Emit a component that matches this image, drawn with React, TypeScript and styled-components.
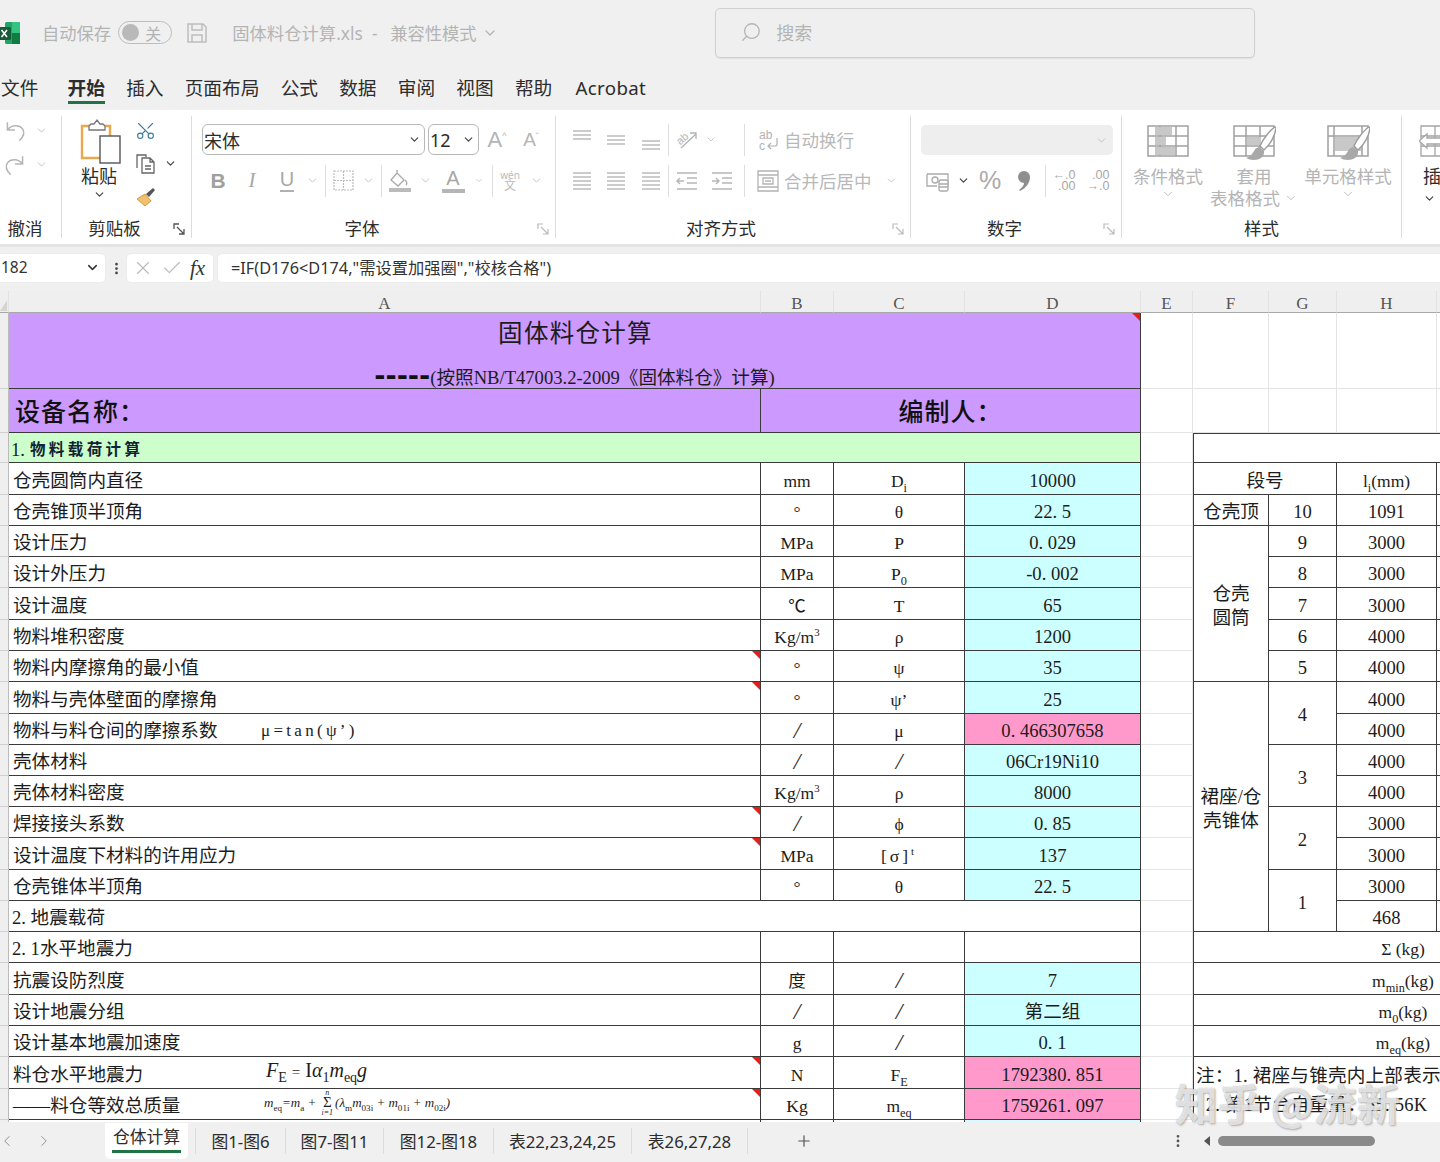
import React from "react";
import styled, { createGlobalStyle } from "styled-components";
import { Search, Scissors, X, Check, Plus, ChevronLeft, ChevronRight, ChevronDown, EllipsisVertical } from "lucide-react";

const UI = `"Noto Sans", "Noto Sans CJK SC", sans-serif`;
const SHEET = `"Liberation Serif", "Noto Sans CJK SC", serif`;
const MUTED = "#b4b4b4";

const Global = createGlobalStyle`
  html, body { margin: 0; padding: 0; background: #f0f0f0; }
  * { box-sizing: border-box; }
`;

const Page = styled.div`
  width: 1440px; height: 1162px; overflow: hidden; background: #f0f0f0;
  display: flex; flex-direction: column; font-family: ${UI}; position: relative;
`;

/* title bar */
const TitleBar = styled.div`
  height: 70px; padding: 0 0 5px 0; display: flex; align-items: center; flex: none;
  color: ${MUTED}; font-size: 17.3px; white-space: nowrap;
`;
const Logo = styled.svg` width: 22px; height: 24px; margin-left: -2px; flex: none; `;
const AutoSave = styled.span` margin-left: 22px; `;
const Toggle = styled.div`
  width: 54px; height: 23px; margin-left: 7px; border: 1px solid #bdbdbd; border-radius: 12px;
  display: flex; align-items: center; gap: 6px; padding-left: 3px; font-size: 16px; flex: none;
`;
const Knob = styled.i` width: 17px; height: 17px; border-radius: 50%; background: #b9b9b9; display: block; `;
const SaveIcon = styled.svg` width: 22px; height: 22px; margin-left: 14px; flex: none; `;
const FileName = styled.span` margin-left: 24px; width: 158px; letter-spacing: 0.05px; `;
const Compat = styled.span` display: flex; align-items: center; gap: 5px; width: 325px; `;
const SearchBox = styled.div`
  width: 540px; height: 50px; margin-top: 1px; border: 1px solid #d0d0d0; border-radius: 5px; background: #efefef;
  box-shadow: 0 1px 1px #e0e0e0; display: flex; align-items: center; gap: 14px; padding: 0 0 3px 24px; font-size: 18px;
`;

/* menu */
const MenuBar = styled.nav`
  height: 40px; flex: none; display: flex; gap: 21.2px; padding-left: 1px; align-items: flex-start; font-size: 18.7px; color: #2c2c2c;
`;
const MenuItem = styled.span<{ $active?: boolean; $ml?: number }>`
  height: 34px; padding-top: 4px; line-height: 28px; white-space: nowrap;
  font-weight: ${(p) => (p.$active ? 700 : 400)};
  border-bottom: ${(p) => (p.$active ? "3px solid #217346" : "none")};
  margin-left: ${(p) => p.$ml ?? 0}px;
`;
const MenuLatin = styled(MenuItem)` letter-spacing: 0.35px; `;

/* ribbon */
const Ribbon = styled.div`
  height: 137px; flex: none; background: #fff; border-bottom: 3px solid #e4e4e4; display: flex; overflow: hidden;
`;
const Group = styled.section<{ $w: number; $pad?: number; $noLine?: boolean }>`
  width: ${(p) => p.$w}px; flex: none; height: 134px; display: flex; flex-direction: column; position: relative;
  padding-left: ${(p) => p.$pad ?? 0}px;
  &::after {
    content: ""; display: ${(p) => (p.$noLine ? "none" : "block")};
    position: absolute; right: 0; top: 6px; bottom: 6px; width: 1px; background: #dcdcdc;
  }
`;
const Body = styled.div` flex: 1; display: flex; min-height: 0; `;
const Stack = styled.div<{ $top?: number; $gap?: number }>`
  display: flex; flex-direction: column; padding-top: ${(p) => p.$top ?? 14}px; gap: ${(p) => p.$gap ?? 10}px;
`;
const Row = styled.div<{ $h?: number }>` display: flex; align-items: center; height: ${(p) => p.$h ?? 31}px; `;
const Slot = styled.div<{ $w: number }>`
  width: ${(p) => p.$w}px; height: 100%; flex: none; display: flex; align-items: center; justify-content: center;
  color: ${MUTED};
`;
const VLine = styled.i<{ $ml?: number; $h?: number }>`
  width: 1px; height: ${(p) => p.$h ?? 32}px; background: #dedede; flex: none; display: block; margin-left: ${(p) => p.$ml ?? 0}px;
`;
const Foot = styled.div<{ $rp?: number }>`
  height: 30px; flex: none; display: flex; align-items: center; padding: 0 ${(p) => p.$rp ?? 1}px 1px 0; font-size: 17.5px; color: #2c2c2c;
`;
const FootText = styled.span` flex: 1; text-align: center; line-height: 21px; `;
const Launcher = styled.svg<{ $ml?: number }>` width: 13px; height: 13px; margin: 2px 5px 0 ${(p) => p.$ml ?? 5}px; flex: none; `;
const Chev = ({ dark, s }: { dark?: boolean; s?: number }) => <ChevronDown size={s ?? 13} strokeWidth={dark ? 2.2 : 1.6} color={dark ? "#444" : "#bbb"} />;

const Paste = styled.div`
  width: 70px; margin-left: -1px; display: flex; flex-direction: column; align-items: center; padding-top: 8px; color: #2c2c2c; font-size: 18px; flex: none;
`;
const PasteIcon = styled.svg` width: 44px; height: 46px; margin-left: 3px; flex: none; `;
const PasteLabel = styled.span` line-height: 24px; `;
const ClipTools = styled.div` width: 46px; display: flex; flex-direction: column; padding-top: 4px; flex: none; `;
const ClipRow = styled.div` height: 34px; display: flex; align-items: center; gap: 7px; padding-left: 1px; `;

const FontBox = styled.div<{ $w: number; $ml?: number }>`
  width: ${(p) => p.$w}px; height: 31px; margin-left: ${(p) => p.$ml ?? 0}px; flex: none;
  border: 1px solid #b8b8b8; border-radius: 6px; display: flex; align-items: center; justify-content: space-between;
  padding: 0 3px 0 1px; font-size: 18px; color: #2c2c2c;
`;
const BigA = styled.span<{ $s: number }>` font-size: ${(p) => p.$s}px; color: ${MUTED}; font-family: "Liberation Sans", sans-serif; `;
const Sup = styled.sup` font-size: 9px; line-height: 0; `;
const Bold = styled.span` font: 700 21px "Liberation Sans", sans-serif; color: #a0a0a0; `;
const Ital = styled.span` font: italic 21px "Liberation Serif", serif; color: #a8a8a8; `;
const Under = styled.span` font: 20px "Liberation Sans", sans-serif; color: #a8a8a8; border-bottom: 2px solid #b0b0b0; line-height: 21px; `;
const ColorA = styled.span` font: 20px "Liberation Sans", sans-serif; color: #a8a8a8; border-bottom: 4px solid #b5b5b5; line-height: 21px; width: 23px; text-align: center; `;
const Wen = styled.span` font-size: 10px; line-height: 10px; color: #bbb; text-align: center; white-space: nowrap; `;
const WenMain = styled.span` display: block; font-size: 12px; line-height: 12px; `;
const AlignTool = styled.span<{ $ml?: number }>`
  color: #b8b8b8; font-size: 17.5px; margin-left: ${(p) => p.$ml ?? 0}px; display: flex; align-items: center; white-space: nowrap;
`;
const NumSelect = styled.div`
  width: 192px; height: 30px; margin-top: 1px; border-radius: 5px; background: #eeeeee; display: flex; align-items: center; justify-content: flex-end; padding-right: 5px;
`;
const Pct = styled.span` font: 25px "Liberation Sans", sans-serif; color: #aaa; `;
const DecText = styled.span` font: 12.5px/11px "Liberation Sans", sans-serif; color: #a8a8a8; text-align: right; white-space: pre; `;
const StyleBtn = styled.div<{ $w: number }>`
  width: ${(p) => p.$w}px; flex: none; display: flex; flex-direction: column; align-items: center; padding-top: 12px;
  font-size: 17.5px; line-height: 22px; color: ${MUTED}; text-align: center;
`;
const StyleIcon = styled.svg` width: 44px; height: 40px; margin-bottom: 3px; flex: none; `;
const StyleLine = styled.span` display: inline-flex; align-items: center; gap: 4px; white-space: nowrap; `;
const InsertBtn = styled.div`
  padding: 12px 0 0 17px; display: flex; flex-direction: column; font-size: 18px; line-height: 22px; color: #2c2c2c; white-space: nowrap; align-items: flex-start;
`;
const InsertText = styled.span` margin-left: 4px; `;

/* formula bar */
const FormulaBar = styled.div`
  flex: none; height: 44px; padding: 7px 0 9px; display: flex; align-items: stretch; color: #333;
`;
const NameBox = styled.div`
  width: 105px; background: #fff; border-radius: 0 4px 4px 0; display: flex; align-items: center; justify-content: space-between;
  padding: 0 5px 2px 1px; font-size: 15.5px; box-shadow: 0 0 1px #ccc;
`;
const Dots = styled.div` width: 22px; display: flex; align-items: center; justify-content: center; `;
const FxBox = styled.div`
  width: 86px; background: #fff; border-radius: 4px; box-shadow: 0 0 1px #ccc; display: flex; align-items: center; gap: 7px; padding-left: 5px;
`;
const Fx = styled.span` font: italic 21px "Liberation Serif", serif; color: #333; line-height: 22px; `;
const Formula = styled.div`
  flex: 1; margin-left: 5px; background: #fff; border-radius: 4px 0 0 4px; box-shadow: 0 0 1px #ccc; padding: 0 0 3px 13px; display: flex; align-items: center;
  font-size: 16.3px; white-space: nowrap; color: #333;
`;

/* sheet */
const Sheet = styled.div`
  flex: none; height: 831px; overflow: hidden; background: #fff; position: relative;
  display: grid;
  grid-template-columns: 9px 752px 73px 131px 176px 52px 76px 68px 100px 176px;
  grid-template-rows: 22px 76px 44px 30px 32px 31px 31px 31px 32px 31px 31px 32px 31px 31px 31px 31px 32px 31px 31px 31px 32px 31px 31px 32px 31px 3px;
  font-family: ${SHEET}; color: #1c1c1c; font-size: 18.6px;
`;
const Head = styled.div<{ $c: number }>`
  grid-column: ${(p) => p.$c}; grid-row: 1; background: #efefef; border-bottom: 1px solid #a8a8a8; border-right: 1px solid #e2e2e2;
  display: flex; align-items: center; justify-content: center; font-size: 17px; color: #555; padding-top: 5px;
`;
const Gutter = styled.div<{ $r: number }>`
  grid-column: 1; grid-row: ${(p) => p.$r}; background: #efefef; border-bottom: 1px solid #cfcfcf; border-right: 1px solid #bbb;
`;
const Corner = styled.svg` width: 9px; height: 22px; display: block; margin-top: -5px; `;

interface CellP { $c: number; $cs?: number; $r: number; $rs?: number; $bg?: string; $justify?: string; $light?: boolean; $l?: boolean; $t?: boolean; $pad?: number; $size?: number; }
const Cell = styled.div<CellP>`
  grid-column: ${(p) => p.$c} / span ${(p) => p.$cs ?? 1};
  grid-row: ${(p) => p.$r} / span ${(p) => p.$rs ?? 1};
  background: ${(p) => p.$bg ?? "#fff"};
  border-right: 1px solid ${(p) => (p.$light ? "#e4e4e4" : "#3a3a3a")};
  border-bottom: 1px solid ${(p) => (p.$light ? "#e4e4e4" : "#3a3a3a")};
  border-left: ${(p) => (p.$l ? "1px solid #3a3a3a" : "none")};
  border-top: ${(p) => (p.$t ? "1px solid #3a3a3a" : "none")};
  display: flex; align-items: center; justify-content: ${(p) => p.$justify ?? "center"};
  padding: 4px ${(p) => p.$pad ?? 0}px 0; white-space: nowrap; position: relative; text-align: center; line-height: 24px;
  font-size: ${(p) => p.$size ?? 18.6}px; min-width: 0; min-height: 0; overflow: hidden;
`;
const Note = styled.i`
  position: absolute; right: 0; top: 0; width: 0; height: 0; border-top: 8px solid #e0201c; border-left: 8px solid transparent;
`;
const TitleCell = styled(Cell)` flex-direction: column; justify-content: space-between; padding: 5px 0 0; `;
const MainTitle = styled.div` font-size: 24.5px; line-height: 32px; letter-spacing: 1.3px; margin-left: 2px; `;
const SubTitle = styled.div` font-size: 18.6px; line-height: 20px; display: flex; align-items: center; `;
const Dash = styled.b` font: 700 27px "DejaVu Sans", sans-serif; line-height: 20px; margin-top: -4px; color: #111; `;
const BigLabel = styled.span` font-size: 25px; font-weight: 500; letter-spacing: 1px; color: #111; `;
const SectionNo = styled.span` font-size: 18.6px; `;
const Section = styled.span` font-size: 15.5px; font-weight: 700; letter-spacing: 3.4px; color: #123; margin-left: 5px; `;
const Label = styled.span<{ $w?: number }>` display: inline-block; min-width: ${(p) => p.$w ?? 0}px; text-align: left; `;
const Formula1 = styled.span` font-size: 17px; letter-spacing: 3.3px; `;
const MathBig = styled.span` font: italic 20px "Liberation Serif", serif; margin-top: -8px; `;
const Upright = styled.span` font-style: normal; `;
const MathSmall = styled.span` font: italic 13px "Liberation Serif", serif; display: inline-block; margin-top: -4px; line-height: 22px; `;
const Sum = styled.span` display: inline-flex; flex-direction: column; align-items: center; vertical-align: middle; line-height: 7px; font-size: 8px; margin: -3px 2px 0; `;
const Sg = styled.span` font-size: 15px; font-style: normal; line-height: 13px; `;
const Sb = styled.sub` font-size: 0.7em; line-height: 0; font-style: normal; `;
const Sp = styled.sup` font-size: 0.62em; line-height: 0; `;
const Unit = styled.span` font-size: 17.5px; `;
const Slash = styled.span` font: italic 24px "Liberation Serif", serif; color: #333; line-height: 24px; `;
const Wide = styled.span` letter-spacing: 3px; `;
const TwoLine = styled.span` white-space: normal; line-height: 24px; `;
const Note2 = styled(Cell)` flex-direction: column; align-items: flex-start; justify-content: flex-start; padding: 4px 0 0 2px; border-bottom: none; font-size: 18.6px; line-height: 29px; letter-spacing: 0.2px; `;

/* tabs */
const TabBar = styled.div`
  flex: none; height: 40px; display: flex; align-items: center; padding-bottom: 3px; background: #f0f0f0; font-size: 16.8px; color: #2c2c2c; position: relative;
`;
const Nav = styled.div` width: 107px; margin-left: -2px; display: flex; align-items: center; gap: 19px; color: #888; flex: none; `;
const ActiveTab = styled.div`
  width: 83px; height: 36px; flex: none; background: #fff; border-radius: 0 0 5px 5px; display: flex; flex-direction: column; align-items: center; justify-content: flex-start; padding-top: 1px;
`;
const ActiveText = styled.span` border-bottom: 3px solid #217346; line-height: 26px; padding: 0 1px; white-space: nowrap; `;
const Tab = styled.div<{ $w: number }>`
  width: ${(p) => p.$w}px; height: 26px; flex: none; display: flex; align-items: center; justify-content: center; border-right: 1px solid #dcdcdc; white-space: nowrap;
`;
const TabSep = styled.i` width: 1px; height: 26px; background: #dcdcdc; margin-left: 7px; display: block; flex: none; `;
const AddSlot = styled.div` width: 112px; display: flex; justify-content: center; color: #555; flex: none; `;
const ScrollDots = styled.div` margin-left: 308px; width: 20px; display: flex; justify-content: center; color: #555; flex: none; margin-right: 16px; `;
const ScrollLeft = styled.i`
  width: 0; height: 0; border-right: 6px solid #555; border-top: 5px solid transparent; border-bottom: 5px solid transparent; display: block; flex: none;
`;
const Thumb = styled.div` width: 157px; height: 10px; border-radius: 5px; background: #8a8a8a; margin-left: 8px; flex: none; `;

const Watermark = styled.div`
  position: absolute; left: 1175px; top: 1076px; font-size: 43px; font-weight: 700; line-height: 52px; white-space: nowrap;
  color: rgba(255,255,255,0.72); font-family: "Noto Sans CJK SC", sans-serif; text-shadow: 0 0 1px rgba(110,110,110,.6), 1px 1px 2px rgba(120,120,120,.5);
  pointer-events: none;
`;

const Stroke = ({ children, w = 24, h = 24, s = 22 }: { children: React.ReactNode; w?: number; h?: number; s?: number }) => (
  <svg width={s} height={(s * h) / w} viewBox={`0 0 ${w} ${h}`} fill="none" stroke="#b6b6b6" strokeWidth="1.4">{children}</svg>
);
const Lines = ({ ys, x1 = 3, x2 = 21 }: { ys: number[]; x1?: number; x2?: number }) => (
  <Stroke s={24}>{ys.map((y) => <path key={y} d={`M${x1} ${y}H${x2}`} />)}</Stroke>
);

const LauncherIcon = ({ ml }: { ml?: number }) => (
  <Launcher $ml={ml} viewBox="0 0 13 13" fill="none" stroke="#bbb" strokeWidth="1.2">
    <path d="M1 6V1h5M4 4l7 7M11 6v5H6" />
  </Launcher>
);
const LauncherDark = ({ ml }: { ml?: number }) => (
  <Launcher $ml={ml} viewBox="0 0 13 13" fill="none" stroke="#555" strokeWidth="1.3">
    <path d="M1 6V1h5M4 4l7 7M11 6v5H6" />
  </Launcher>
);
const Brush = () => (
  <>
    <path d="M43 5c-5 3-12 12-15 19l4 4c6-5 11-14 12-22z" fill="#fff" stroke="#9c9c9c" strokeWidth="1.4" />
    <path d="M27 25c-6 1-5 9-13 11 7 4 19 2 18-7z" fill="#a8a8a8" stroke="none" />
  </>
);

const headers: [number, string][] = [[2, "A"], [3, "B"], [4, "C"], [5, "D"], [6, "E"], [7, "F"], [8, "G"], [9, "H"], [10, "I"]];
const CYAN = "#ccffff", PINK = "#ff99cc", PURPLE = "#cc99ff", GREEN = "#ccffcc";
const S = <Slash>/</Slash>;

type RowData = { r: number; a: React.ReactNode; note?: boolean; b?: React.ReactNode; c?: React.ReactNode; d?: React.ReactNode; pink?: boolean; plain?: boolean };
const rows: RowData[] = [
  { r: 5, a: "仓壳圆筒内直径", b: "mm", c: <>D<Sb>i</Sb></>, d: "10000" },
  { r: 6, a: "仓壳锥顶半顶角", b: "°", c: "θ", d: "22. 5" },
  { r: 7, a: "设计压力", b: "MPa", c: "P", d: "0. 029" },
  { r: 8, a: "设计外压力", b: "MPa", c: <>P<Sb>0</Sb></>, d: "-0. 002" },
  { r: 9, a: "设计温度", b: "℃", c: "T", d: "65" },
  { r: 10, a: "物料堆积密度", b: <>Kg/m<Sp>3</Sp></>, c: "ρ", d: "1200" },
  { r: 11, a: "物料内摩擦角的最小值", note: true, b: "°", c: "ψ", d: "35" },
  { r: 12, a: "物料与壳体壁面的摩擦角", note: true, b: "°", c: "ψ’", d: "25" },
  { r: 13, a: <><Label $w={248}>物料与料仓间的摩擦系数</Label><Formula1>μ=tan(ψ’)</Formula1></>, b: S, c: "μ", d: "0. 466307658", pink: true },
  { r: 14, a: "壳体材料", b: S, c: S, d: "06Cr19Ni10" },
  { r: 15, a: "壳体材料密度", b: <>Kg/m<Sp>3</Sp></>, c: "ρ", d: "8000" },
  { r: 16, a: "焊接接头系数", note: true, b: S, c: "ϕ", d: "0. 85" },
  { r: 17, a: "设计温度下材料的许用应力", note: true, b: "MPa", c: <Wide>[σ]<Sp>t</Sp></Wide>, d: "137" },
  { r: 18, a: "仓壳锥体半顶角", b: "°", c: "θ", d: "22. 5" },
  { r: 20, a: "2. 1水平地震力", plain: true },
  { r: 21, a: "抗震设防烈度", b: "度", c: S, d: "7" },
  { r: 22, a: "设计地震分组", b: S, c: S, d: "第二组" },
  { r: 23, a: "设计基本地震加速度", b: "g", c: S, d: "0. 1" },
  {
    r: 24, note: true, pink: true, b: "N", c: <>F<Sb>E</Sb></>, d: "1792380. 851",
    a: <><Label $w={253}>料仓水平地震力</Label><MathBig>F<Sb>E</Sb> <Sg>=</Sg> <Upright>I</Upright>α<Sb>1</Sb>m<Sb>eq</Sb>g</MathBig></>,
  },
  {
    r: 25, note: true, pink: true, b: "Kg", c: <>m<Sb>eq</Sb></>, d: "1759261. 097",
    a: <><Label $w={251}>——料仓等效总质量</Label><MathSmall>m<Sb>eq</Sb>=m<Sb>a</Sb> + <Sum>n<Sg>Σ</Sg>i=1</Sum>(λ<Sb>m</Sb>m<Sb>03i</Sb> + m<Sb>01i</Sb> + m<Sb>02i</Sb>)</MathSmall></>,
  },
];

const App = () => (
  <Page>
    <Global />
    <TitleBar>
      <Logo viewBox="0 0 22 24">
        <rect x="7" y="1" width="15" height="22" rx="1.5" fill="#21a366" />
        <rect x="14" y="1" width="8" height="11" fill="#33c481" />
        <rect x="14" y="12" width="8" height="11" fill="#107c41" />
        <rect x="0" y="6" width="13" height="13" rx="1.5" fill="#185c37" />
        <path d="M3.5 9l5.5 7M9 9l-5.5 7" stroke="#fff" strokeWidth="1.6" />
      </Logo>
      <AutoSave>自动保存</AutoSave>
      <Toggle><Knob />关</Toggle>
      <SaveIcon viewBox="0 0 22 22" fill="none" stroke="#bdbdbd" strokeWidth="1.5">
        <path d="M2 2h15l3 3v15H2zM6 2v6h10V2M6 20v-7h10v7" />
      </SaveIcon>
      <FileName>固体料仓计算.xls &nbsp;-&nbsp;</FileName>
      <Compat>兼容性模式 <ChevronDown size={16} color="#b4b4b4" /></Compat>
      <SearchBox><Search size={22} color="#b4b4b4" strokeWidth={1.4} style={{ transform: "scaleX(-1)" }} />搜索</SearchBox>
    </TitleBar>

    <MenuBar>
      <MenuItem>文件</MenuItem>
      <MenuItem $active $ml={8}>开始</MenuItem>
      <MenuItem>插入</MenuItem>
      <MenuItem>页面布局</MenuItem>
      <MenuItem>公式</MenuItem>
      <MenuItem>数据</MenuItem>
      <MenuItem>审阅</MenuItem>
      <MenuItem>视图</MenuItem>
      <MenuItem>帮助</MenuItem>
      <MenuLatin $ml={2}>Acrobat</MenuLatin>
    </MenuBar>

    <Ribbon>
      <Group $w={62}>
        <Body>
          <Stack $top={5} $gap={3}>
            <Row>
              <Slot $w={30}><Stroke s={26}><path d="M5 4v7h7M5 11c4-5 11-5 14-1 2 3 1 7-3 11" /></Stroke></Slot>
              <Slot $w={22}><Chev /></Slot>
            </Row>
            <Row>
              <Slot $w={30}><Stroke s={26}><path d="M19 4v7h-7M19 11c-4-5-11-5-14-1-2 3-1 7 3 11" /></Stroke></Slot>
              <Slot $w={22}><Chev /></Slot>
            </Row>
          </Stack>
        </Body>
        <Foot $rp={12}><FootText>撤消</FootText></Foot>
      </Group>

      <Group $w={130} $pad={3}>
        <Body>
          <Paste>
            <PasteIcon viewBox="0 0 44 46" fill="none">
              <path d="M3 8h28v32H3z" fill="#fff" stroke="#e8a94c" strokeWidth="2.4" />
              <path d="M10 8l2-2h3l3-4 3 4h3l2 2v4H10z" fill="#fff" stroke="#777" strokeWidth="1.3" />
              <rect x="21" y="18" width="20" height="27" fill="#fff" stroke="#555" strokeWidth="1.4" />
            </PasteIcon>
            <PasteLabel>粘贴</PasteLabel>
            <Chev dark />
          </Paste>
          <ClipTools>
            <ClipRow><Scissors size={21} color="#3f7d9f" strokeWidth={1.3} style={{ transform: "rotate(-90deg)" }} /></ClipRow>
            <ClipRow>
              <svg width="22" height="22" viewBox="0 0 22 22" fill="none" stroke="#666" strokeWidth="1.3">
                <path d="M2 15V2h9v2M7 5h8l4 4v11H7zM15 5v4h4M10 13h6M10 16h6" />
              </svg>
              <Chev dark />
            </ClipRow>
            <ClipRow>
              <svg width="22" height="22" viewBox="0 0 22 22">
                <path d="M2 13l8-5 6 7-6 5z" fill="#f0c070" stroke="#d99a3a" />
                <path d="M11 8l7-6 2 2-6 7z" fill="#555" />
              </svg>
            </ClipRow>
          </ClipTools>
        </Body>
        <Foot $rp={1}><FootText>剪贴板</FootText><LauncherDark ml={9} /></Foot>
      </Group>

      <Group $w={364} $pad={10}>
        <Body>
          <Stack>
            <Row>
              <FontBox $w={223}>宋体<Chev dark /></FontBox>
              <FontBox $w={51} $ml={3}>12<Chev dark /></FontBox>
              <Slot $w={36}><BigA $s={22}>A<Sup>^</Sup></BigA></Slot>
              <Slot $w={32}><BigA $s={19}>A<Sup>ˇ</Sup></BigA></Slot>
            </Row>
            <Row>
              <Slot $w={32}><Bold>B</Bold></Slot>
              <Slot $w={36}><Ital>I</Ital></Slot>
              <Slot $w={34}><Under>U</Under></Slot>
              <Slot $w={16}><Chev /></Slot>
              <VLine $ml={5} />
              <Slot $w={34}>
                <svg width="21" height="21" viewBox="0 0 21 21" fill="none" stroke="#bbb" strokeWidth="1.2" strokeDasharray="2 1">
                  <path d="M1 1h19v19H1zM10.5 1v19M1 10.5h19" />
                </svg>
              </Slot>
              <Slot $w={16}><Chev /></Slot>
              <VLine $ml={5} />
              <Slot $w={36}>
                <svg width="24" height="24" viewBox="0 0 24 24" fill="none" stroke="#aaa" strokeWidth="1.3">
                  <path d="M3 11l6-7 7 7-6 6zM9 4V1M17 11c2 2 2 4 1 5" />
                  <rect x="1" y="19" width="22" height="4" fill="#bbb" stroke="none" />
                </svg>
              </Slot>
              <Slot $w={14}><Chev /></Slot>
              <Slot $w={42}><ColorA>A</ColorA></Slot>
              <Slot $w={10}><Chev /></Slot>
              <VLine $ml={8} />
              <Slot $w={34}><Wen>wén<WenMain>文</WenMain></Wen></Slot>
              <Slot $w={18}><Chev /></Slot>
            </Row>
          </Stack>
        </Body>
        <Foot><FootText>字体</FootText><LauncherIcon ml={15} /></Foot>
      </Group>

      <Group $w={355} $pad={9}>
        <Body>
          <Stack>
            <Row>
              <Slot $w={34}><Lines ys={[3, 7, 11]} /></Slot>
              <Slot $w={34}><Lines ys={[8, 12, 16]} /></Slot>
              <Slot $w={35}><Lines ys={[13, 17, 21]} /></Slot>
              <VLine />
              <Slot $w={36}>
                <svg width="24" height="24" viewBox="0 0 24 24" fill="none" stroke="#b2b2b2" strokeWidth="1.3">
                  <path d="M6 20L21 6M15 5h6v6" />
                  <text x="2" y="15" fontSize="11" fill="#b2b2b2" stroke="none" fontFamily="Liberation Sans" transform="rotate(-42 7 12)">ab</text>
                </svg>
              </Slot>
              <Slot $w={12}><Chev /></Slot>
              <Slot $w={27} />
              <VLine />
              <AlignTool $ml={12}>
                <svg width="22" height="24" viewBox="0 0 22 24" fill="none" stroke="#b2b2b2" strokeWidth="1.2" style={{ marginRight: 5 }}>
                  <text x="2" y="11" fontSize="12" fill="#b2b2b2" stroke="none" fontFamily="Liberation Sans">ab</text>
                  <text x="2" y="22" fontSize="12" fill="#b2b2b2" stroke="none" fontFamily="Liberation Sans">c</text>
                  <path d="M20 10v6a2 2 0 0 1-2 2h-6M14 15l-3 3 3 3" />
                </svg>
                自动换行
              </AlignTool>
            </Row>
            <Row>
              <Slot $w={34}><Lines ys={[4, 8, 12, 16, 20]} /></Slot>
              <Slot $w={34}><Lines ys={[4, 8, 12, 16, 20]} /></Slot>
              <Slot $w={35}><Lines ys={[4, 8, 12, 16, 20]} /></Slot>
              <VLine />
              <Slot $w={36}>
                <Stroke s={24}><path d="M2 4h20M12 9h10M12 14h10M2 20h20M9 12H2M5 9l-3 3 3 3" /></Stroke>
              </Slot>
              <Slot $w={33}>
                <Stroke s={24}><path d="M2 4h20M12 9h10M12 14h10M2 20h20M2 12h7M6 9l3 3-3 3" /></Stroke>
              </Slot>
              <Slot $w={6} />
              <VLine />
              <AlignTool $ml={12}>
                <svg width="22" height="22" viewBox="0 0 22 22" fill="none" stroke="#b2b2b2" strokeWidth="1.3" style={{ marginRight: 5 }}>
                  <path d="M1 1h20v20H1zM1 5h20M1 17h20M6 8h10v6H6zM8 11h6" />
                </svg>
                合并后居中
              </AlignTool>
              <Slot $w={40}><Chev /></Slot>
            </Row>
          </Stack>
        </Body>
        <Foot><FootText>对齐方式</FootText><LauncherIcon ml={15} /></Foot>
      </Group>

      <Group $w={211} $pad={10}>
        <Body>
          <Stack>
            <Row><NumSelect><Chev /></NumSelect></Row>
            <Row>
              <Slot $w={34}>
                <svg width="24" height="24" viewBox="0 0 24 24" fill="none" stroke="#aaa" strokeWidth="1.3">
                  <path d="M1 5h21v12H14M1 5v12h10" />
                  <circle cx="9" cy="11" r="3" />
                  <rect x="13" y="11" width="9" height="11" rx="2" fill="#fff" />
                  <path d="M13 15h9M13 18h9" />
                </svg>
              </Slot>
              <Slot $w={16}><Chev dark /></Slot>
              <Slot $w={38}><Pct>%</Pct></Slot>
              <Slot $w={30}>
                <svg width="14" height="20" viewBox="0 0 14 20">
                  <path d="M7 0a6 6 0 0 1 6 6c0 6-4 11-10 14l-1-1c3-2 5-5 5-7a6 6 0 0 1 0-12z" fill="#8e8e8e" />
                </svg>
              </Slot>
              <VLine $ml={6} />
              <Slot $w={36}><DecText>{"←.0\n.00"}</DecText></Slot>
              <Slot $w={32}><DecText>{".00\n→.0"}</DecText></Slot>
            </Row>
          </Stack>
        </Body>
        <Foot><FootText>数字</FootText><LauncherIcon ml={15} /></Foot>
      </Group>

      <Group $w={280}>
        <Body>
          <StyleBtn $w={92}>
            <StyleIcon viewBox="0 0 44 40" fill="none" stroke="#a0a0a0" strokeWidth="1.5">
              <path d="M2 4h40v30H2zM2 14h40M2 24h40M14 4v30M30 4v30" />
              <rect x="9" y="5" width="17" height="8" fill="#c8c8c8" stroke="none" />
              <rect x="9" y="15" width="11" height="8" fill="#c8c8c8" stroke="none" />
              <rect x="9" y="25" width="20" height="8" fill="#c8c8c8" stroke="none" />
            </StyleIcon>
            条件格式
            <Chev s={14} />
          </StyleBtn>
          <StyleBtn $w={80}>
            <StyleIcon viewBox="0 0 44 40" fill="none" stroke="#a0a0a0" strokeWidth="1.5">
              <path d="M2 4h40v30H2zM2 14h40M2 24h40M14 4v30M28 4v30" />
              <rect x="15" y="15" width="14" height="8" fill="#c8c8c8" stroke="none" />
              <Brush />
            </StyleIcon>
            套用
            <StyleLine>表格格式<Chev s={14} /></StyleLine>
          </StyleBtn>
          <StyleBtn $w={108}>
            <StyleIcon viewBox="0 0 44 40" fill="none" stroke="#a0a0a0" strokeWidth="1.5">
              <path d="M2 4h40v30H2zM2 14h40M8 4v30M36 4v30" />
              <rect x="9" y="15" width="26" height="14" fill="#c8c8c8" stroke="none" />
              <Brush />
            </StyleIcon>
            单元格样式
            <Chev s={14} />
          </StyleBtn>
        </Body>
        <Foot><FootText>样式</FootText></Foot>
      </Group>

      <Group $w={100} $noLine>
        <InsertBtn>
          <svg width="44" height="40" viewBox="0 0 44 40" fill="none" stroke="#a5a5a5" strokeWidth="1.3" style={{ marginBottom: 3 }}>
            <path d="M2 4h40v30H2zM16 4v30M2 14h40M2 24h40" />
            <path d="M0 19l8-7v4h16v6H8v4z" fill="#fff" />
          </svg>
          <InsertText>插入</InsertText>
          <InsertText><Chev dark /></InsertText>
        </InsertBtn>
      </Group>
    </Ribbon>

    <FormulaBar>
      <NameBox>182<ChevronDown size={15} strokeWidth={2.4} color="#333" /></NameBox>
      <Dots><EllipsisVertical size={15} color="#444" strokeWidth={2.4} /></Dots>
      <FxBox>
        <X size={22} color="#b9b9b9" strokeWidth={1.2} />
        <Check size={22} color="#b9b9b9" strokeWidth={1.2} />
        <Fx>fx</Fx>
      </FxBox>
      <Formula>=IF(D176&lt;D174,"需设置加强圈","校核合格")</Formula>
    </FormulaBar>

    <Sheet>
      <Head $c={1}>
        <Corner viewBox="0 0 9 22"><path d="M8 9v12H0z" fill="#d4d4d4" /></Corner>
      </Head>
      {headers.map(([c, t]) => <Head key={t} $c={c}>{t}</Head>)}
      {Array.from({ length: 25 }, (_, i) => <Gutter key={i} $r={i + 2} />)}

      <TitleCell $c={2} $cs={4} $r={2} $bg={PURPLE}>
        <MainTitle>固体料仓计算</MainTitle>
        <SubTitle><Dash>-----</Dash>(按照NB/T47003.2-2009《固体料仓》计算)</SubTitle>
        <Note />
      </TitleCell>
      <Cell $c={2} $r={3} $bg={PURPLE} $justify="flex-start" $pad={6}><BigLabel>设备名称：</BigLabel></Cell>
      <Cell $c={3} $cs={3} $r={3} $bg={PURPLE}><BigLabel>编制人：</BigLabel></Cell>
      <Cell $c={2} $cs={4} $r={4} $bg={GREEN} $justify="flex-start" $pad={2}><SectionNo>1.</SectionNo><Section>物料载荷计算</Section></Cell>

      {rows.map((row) => (
        <React.Fragment key={row.r}>
          <Cell $c={2} $r={row.r} $justify="flex-start" $pad={row.plain ? 3 : 4}>{row.a}{row.note && <Note />}</Cell>
          <Cell $c={3} $r={row.r}><Unit>{row.b}</Unit></Cell>
          <Cell $c={4} $r={row.r}><Unit>{row.c}</Unit></Cell>
          <Cell $c={5} $r={row.r} $bg={row.plain ? "#fff" : row.pink ? PINK : CYAN}>{row.d}</Cell>
        </React.Fragment>
      ))}
      <Cell $c={2} $cs={4} $r={19} $justify="flex-start" $pad={3}>2. 地震载荷</Cell>
      <Cell $c={2} $r={26} />
      <Cell $c={3} $r={26} />
      <Cell $c={4} $r={26} />
      <Cell $c={5} $r={26} $bg={CYAN} />

      {Array.from({ length: 25 }, (_, i) => <Cell key={i} $c={6} $r={i + 2} $light />)}
      {[7, 8, 9, 10].map((c) => (
        <React.Fragment key={c}>
          <Cell $c={c} $r={2} $light />
          <Cell $c={c} $r={3} $light />
        </React.Fragment>
      ))}

      <Cell $c={7} $cs={4} $r={4} $l $t />
      <Cell $c={7} $cs={2} $r={5} $l>段号</Cell>
      <Cell $c={9} $r={5}><Unit>l<Sb>i</Sb>(mm)</Unit></Cell>
      <Cell $c={10} $r={5} />
      <Cell $c={7} $r={6} $l>仓壳顶</Cell>
      <Cell $c={8} $r={6}>10</Cell>
      <Cell $c={9} $r={6}>1091</Cell>
      <Cell $c={10} $r={6} />
      <Cell $c={7} $r={7} $rs={5} $l><TwoLine>仓壳<br />圆筒</TwoLine></Cell>
      {[[7, "9", "3000"], [8, "8", "3000"], [9, "7", "3000"], [10, "6", "4000"], [11, "5", "4000"]].map(([r, g, h]) => (
        <React.Fragment key={r}>
          <Cell $c={8} $r={r as number}>{g}</Cell>
          <Cell $c={9} $r={r as number}>{h}</Cell>
          <Cell $c={10} $r={r as number} />
        </React.Fragment>
      ))}
      <Cell $c={7} $r={12} $rs={8} $l><TwoLine>裙座/仓<br />壳锥体</TwoLine></Cell>
      {[[12, "4", "4000", "4000"], [14, "3", "4000", "4000"], [16, "2", "3000", "3000"], [18, "1", "3000", "468"]].map(([r, g, h1, h2]) => (
        <React.Fragment key={r}>
          <Cell $c={8} $r={r as number} $rs={2}>{g}</Cell>
          <Cell $c={9} $r={r as number}>{h1}</Cell>
          <Cell $c={9} $r={(r as number) + 1}>{h2}</Cell>
          <Cell $c={10} $r={r as number} />
          <Cell $c={10} $r={(r as number) + 1} />
        </React.Fragment>
      ))}
      <Cell $c={7} $cs={4} $r={20} $l><Unit>Σ (kg)</Unit></Cell>
      <Cell $c={7} $cs={4} $r={21} $l><Unit>m<Sb>min</Sb>(kg)</Unit></Cell>
      <Cell $c={7} $cs={4} $r={22} $l><Unit>m<Sb>0</Sb>(kg)</Unit></Cell>
      <Cell $c={7} $cs={4} $r={23} $l><Unit>m<Sb>eq</Sb>(kg)</Unit></Cell>
      <Note2 $c={7} $cs={4} $r={24} $rs={2} $l $justify="flex-start">
        <span>注：1. 裙座与锥壳内上部表示</span>
        <span>&nbsp;&nbsp;2. 第1节台自重量：55. 56K</span>
      </Note2>
    </Sheet>

    <TabBar>
      <Nav>
        <ChevronLeft size={18} strokeWidth={1.2} />
        <ChevronRight size={18} strokeWidth={1.2} />
      </Nav>
      <ActiveTab><ActiveText>仓体计算</ActiveText></ActiveTab>
      <TabSep />
      <Tab $w={90}>图1-图6</Tab>
      <Tab $w={98}>图7-图11</Tab>
      <Tab $w={110}>图12-图18</Tab>
      <Tab $w={138}>表22,23,24,25</Tab>
      <Tab $w={116}>表26,27,28</Tab>
      <AddSlot><Plus size={18} strokeWidth={1.6} /></AddSlot>
      <ScrollDots><EllipsisVertical size={16} strokeWidth={2.2} /></ScrollDots>
      <ScrollLeft />
      <Thumb />
    </TabBar>

    <Watermark>知乎 @流新</Watermark>
  </Page>
);

export default App;
